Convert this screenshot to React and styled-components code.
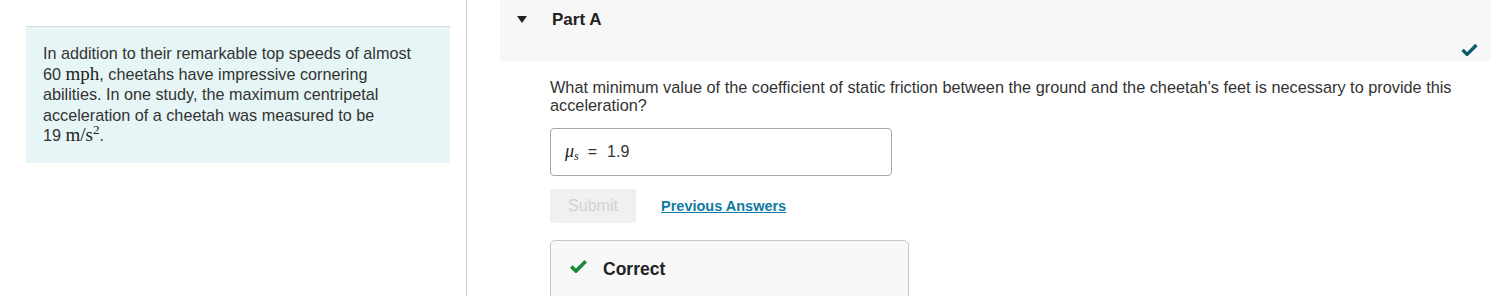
import React from 'react'
import styled, { createGlobalStyle } from 'styled-components'

const GlobalStyle = createGlobalStyle`
  body {
    margin: 0;
    background: #ffffff;
    font-family: "Liberation Sans", Arial, sans-serif;
    color: #333333;
  }
`

const Page = styled.div`
  display: flex;
  height: 296px;
  overflow: hidden;
`

const LeftColumn = styled.div`
  width: 467px;
  flex-shrink: 0;
  border-right: 1px solid #b9cde5;
  padding: 26px 0 0 26px;
  box-sizing: border-box;
`

const IntroPanel = styled.div`
  width: 424px;
  height: 137px;
  box-sizing: border-box;
  background: #e6f5f5;
  border-top: 1px solid #d6dee2;
  padding: 16px 17px;
  font-size: 16.2px;
  line-height: 20.5px;
  color: #333333;
`

const Math = styled.span`
  font-family: "Liberation Serif", "DejaVu Serif", serif;
  font-size: 19px;
  line-height: 1;
  color: #222222;

  sup {
    font-size: 13px;
    line-height: 0;
    vertical-align: 7px;
  }
`

const RightColumn = styled.div`
  flex: 1;
  padding-left: 33px;
`

const PartHeader = styled.div`
  position: relative;
  height: 61px;
  background: #f7f7f7;
  display: flex;
  align-items: flex-start;
  padding: 10px 0 0 17px;
  box-sizing: border-box;
`

const Caret = styled.span`
  width: 0;
  height: 0;
  border-left: 5.5px solid transparent;
  border-right: 5.5px solid transparent;
  border-top: 7px solid #222222;
  margin-top: 6px;
`

const PartTitle = styled.h2`
  margin: 0 0 0 25px;
  font-size: 17px;
  line-height: 20px;
  font-weight: bold;
  color: #222222;
`

const DoneMark = styled.div`
  position: absolute;
  right: 13px;
  bottom: 1px;
`

const PartBody = styled.div`
  padding: 17px 0 0 50px;
`

const Question = styled.p`
  margin: 0;
  font-size: 16.3px;
  line-height: 18px;
  color: #333333;
`

const AnswerField = styled.div`
  margin-top: 14px;
  width: 342px;
  height: 48px;
  box-sizing: border-box;
  border: 1px solid #a8a8a8;
  border-radius: 4px;
  display: flex;
  align-items: center;
  padding-left: 14px;
  font-size: 16px;
  color: #333333;
`

const MathVar = styled.span`
  font-family: "Liberation Serif", "DejaVu Serif", serif;
  font-style: italic;
  font-size: 18px;
  color: #222222;

  sub {
    font-size: 12px;
    vertical-align: -3px;
  }
`

const Equals = styled.span`
  margin: 0 10px 0 9px;
`

const Actions = styled.div`
  margin-top: 13px;
  display: flex;
  align-items: center;
  gap: 25px;
`

const SubmitButton = styled.button`
  width: 86px;
  height: 34px;
  border: none;
  border-radius: 3px;
  background: #f0f0f0;
  color: #d0d0d0;
  font-family: "Liberation Sans", Arial, sans-serif;
  font-size: 16px;
  padding: 0;
`

const AnswersLink = styled.a`
  font-size: 14.5px;
  font-weight: bold;
  color: #0f7aa3;
  text-decoration: underline;
`

const Feedback = styled.div`
  margin-top: 17px;
  width: 359px;
  height: 70px;
  box-sizing: border-box;
  border: 1px solid #c8c8c8;
  border-radius: 5px;
  background: #f8f8f8;
  display: flex;
  align-items: flex-start;
  padding: 18px 0 0 19px;
  gap: 16px;
`

const FeedbackText = styled.span`
  font-size: 17.5px;
  font-weight: bold;
  color: #222222;
  line-height: 20px;
`

const Check = ({ color, width, height }) => (
  <svg width={width} height={height} viewBox="0 0 20 16">
    <path d="M1.5 8.5 L7 14 L18.5 2.5" fill="none" stroke={color} strokeWidth="4.2" />
  </svg>
)

export default function App() {
  return (
    <>
      <GlobalStyle />
      <Page>
        <LeftColumn>
          <IntroPanel>
            In addition to their remarkable top speeds of almost
            <br />
            60 <Math>mph</Math>, cheetahs have impressive cornering
            <br />
            abilities. In one study, the maximum centripetal
            <br />
            acceleration of a cheetah was measured to be
            <br />
            19 <Math>m/s<sup>2</sup></Math>.
          </IntroPanel>
        </LeftColumn>
        <RightColumn>
          <PartHeader>
            <Caret />
            <PartTitle>Part A</PartTitle>
            <DoneMark>
              <Check color="#0b5b70" width={17} height={13} />
            </DoneMark>
          </PartHeader>
          <PartBody>
            <Question>
              What minimum value of the coefficient of static friction between the ground and the cheetah's feet is necessary to provide this
              <br />
              acceleration?
            </Question>
            <AnswerField>
              <MathVar>
                μ<sub>s</sub>
              </MathVar>
              <Equals>=</Equals>
              1.9
            </AnswerField>
            <Actions>
              <SubmitButton disabled>Submit</SubmitButton>
              <AnswersLink href="#">Previous Answers</AnswersLink>
            </Actions>
            <Feedback>
              <Check color="#1a8a3a" width={17} height={14} />
              <FeedbackText>Correct</FeedbackText>
            </Feedback>
          </PartBody>
        </RightColumn>
      </Page>
    </>
  )
}
